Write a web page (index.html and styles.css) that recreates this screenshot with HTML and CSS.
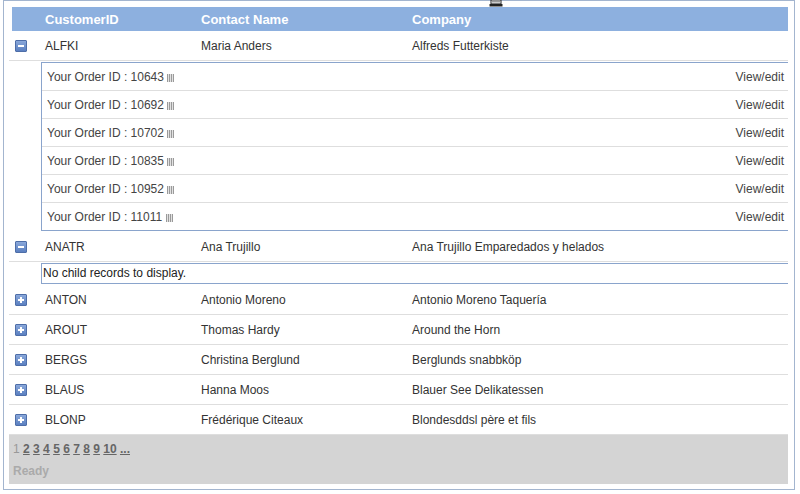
FILE: index.html
```html
<!DOCTYPE html>
<html lang="en">
<head>
    <meta charset="UTF-8">
    <title>Customers</title>
    <link rel="stylesheet" href="styles.css">
</head>
<body>
    <svg class="drag-handle" width="14" height="7" viewBox="0 0 14 7">
        <rect x="2" y="0" width="10" height="4" fill="#fff" stroke="#222" stroke-width="1"/>
        <path d="M3 1.5h8M3 3h8" stroke="#555" stroke-width="0.6"/>
        <rect x="0.5" y="4" width="13" height="2.5" fill="#222"/>
    </svg>

    <div class="grid-frame">
        <div class="grid">
            <div class="grid-head">
                <span></span>
                <span class="cell">CustomerID</span>
                <span class="cell">Contact Name</span>
                <span class="cell">Company</span>
            </div>

            <div class="row">
                <span class="toggle"><i class="expander minus"></i></span>
                <span class="cell">ALFKI</span>
                <span class="cell">Maria Anders</span>
                <span class="cell">Alfreds Futterkiste</span>
            </div>
            <div class="detail">
                <div class="orders">
                    <div class="order"><span>Your Order ID : 10643 <i class="note"></i></span><a href="#">View/edit</a></div>
                    <div class="order"><span>Your Order ID : 10692 <i class="note"></i></span><a href="#">View/edit</a></div>
                    <div class="order"><span>Your Order ID : 10702 <i class="note"></i></span><a href="#">View/edit</a></div>
                    <div class="order"><span>Your Order ID : 10835 <i class="note"></i></span><a href="#">View/edit</a></div>
                    <div class="order"><span>Your Order ID : 10952 <i class="note"></i></span><a href="#">View/edit</a></div>
                    <div class="order"><span>Your Order ID : 11011 <i class="note"></i></span><a href="#">View/edit</a></div>
                </div>
            </div>

            <div class="row">
                <span class="toggle"><i class="expander minus"></i></span>
                <span class="cell">ANATR</span>
                <span class="cell">Ana Trujillo</span>
                <span class="cell">Ana Trujillo Emparedados y helados</span>
            </div>
            <div class="detail">
                <div class="empty">No child records to display.</div>
            </div>

            <div class="row">
                <span class="toggle"><i class="expander plus"></i></span>
                <span class="cell">ANTON</span>
                <span class="cell">Antonio Moreno</span>
                <span class="cell">Antonio Moreno Taquería</span>
            </div>
            <div class="row">
                <span class="toggle"><i class="expander plus"></i></span>
                <span class="cell">AROUT</span>
                <span class="cell">Thomas Hardy</span>
                <span class="cell">Around the Horn</span>
            </div>
            <div class="row">
                <span class="toggle"><i class="expander plus"></i></span>
                <span class="cell">BERGS</span>
                <span class="cell">Christina Berglund</span>
                <span class="cell">Berglunds snabbköp</span>
            </div>
            <div class="row">
                <span class="toggle"><i class="expander plus"></i></span>
                <span class="cell">BLAUS</span>
                <span class="cell">Hanna Moos</span>
                <span class="cell">Blauer See Delikatessen</span>
            </div>
            <div class="row">
                <span class="toggle"><i class="expander plus"></i></span>
                <span class="cell">BLONP</span>
                <span class="cell">Frédérique Citeaux</span>
                <span class="cell">Blondesddsl père et fils</span>
            </div>

            <div class="pager">
                <div class="pages">
                    <span class="current">1</span>
                    <a href="#">2</a>
                    <a href="#">3</a>
                    <a href="#">4</a>
                    <a href="#">5</a>
                    <a href="#">6</a>
                    <a href="#">7</a>
                    <a href="#">8</a>
                    <a href="#">9</a>
                    <a href="#">10</a>
                    <a href="#">...</a>
                </div>
                <div class="status">Ready</div>
            </div>
        </div>
    </div>
</body>
</html>
```

FILE: styles.css
```css
body {
    margin: 0;
    background: #fff;
    font-family: "Liberation Sans", Arial, sans-serif;
    font-size: 12px;
    color: #333;
    position: relative;
}

.drag-handle {
    position: absolute;
    left: 489px;
    top: 0;
}

.grid-frame {
    box-sizing: border-box;
    margin-left: 3px;
    width: 792px;
    border: 1px solid #a3b5cf;
    padding: 6px 6px 5px 5px;
    box-shadow: 0 3px 0 -1px #e4e8ee;
}

.grid-head,
.row {
    display: grid;
    grid-template-columns: 31px 156px 211px 1fr;
    align-items: center;
}

.grid-head {
    height: 24px;
    margin-left: 3px;
    background: #8db0df;
    color: #fff;
    font-size: 13px;
    font-weight: bold;
    grid-template-columns: 28px 156px 211px 1fr;
}

.cell {
    padding-left: 5px;
    white-space: nowrap;
}

.row {
    height: 29px;
    border-bottom: 1px solid #dedede;
}

.toggle {
    display: flex;
    padding-left: 6px;
}

.expander {
    width: 10px;
    height: 10px;
    border: 1px solid #4e6ea8;
    border-radius: 1px;
    background: linear-gradient(#8aa8da, #5a7fc0);
    position: relative;
}

.expander::before,
.expander::after {
    content: "";
    position: absolute;
    background: #fff;
}

.expander::before {
    left: 2px;
    top: 4px;
    width: 6px;
    height: 2px;
}

.expander.plus::after {
    left: 4px;
    top: 2px;
    width: 2px;
    height: 6px;
}

.detail {
    padding: 1px 0 1px 32px;
}

.orders {
    border-top: 1px solid #8aa4cc;
    border-left: 1px solid #8aa4cc;
    border-bottom: 1px solid #8aa4cc;
}

.order {
    display: flex;
    justify-content: space-between;
    align-items: center;
    height: 27px;
    padding: 0 4px 0 5px;
    color: #444;
    border-bottom: 1px solid #dedede;
}

.order:last-child {
    border-bottom: none;
}

.order a {
    color: #444;
    text-decoration: none;
}

.note {
    display: inline-block;
    width: 7px;
    height: 8px;
    vertical-align: -1px;
    background: repeating-linear-gradient(90deg, #9a9a9a 0 1px, #e2e2e2 1px 2px);
}

.empty {
    height: 19px;
    line-height: 19px;
    padding-left: 1px;
    color: #222;
    border-top: 1px solid #8aa4cc;
    border-left: 1px solid #8aa4cc;
    border-bottom: 1px solid #8aa4cc;
}

.pager {
    background: #d4d4d4;
    height: 49px;
    padding: 6px 0 0 4px;
    box-sizing: border-box;
}

.pages {
    height: 16px;
    line-height: 16px;
}

.pages .current {
    color: #999;
}

.pages a {
    color: #666;
    font-weight: bold;
    text-decoration: underline;
}

.status {
    margin-top: 7px;
    color: #aaa;
    font-weight: bold;
}
```
